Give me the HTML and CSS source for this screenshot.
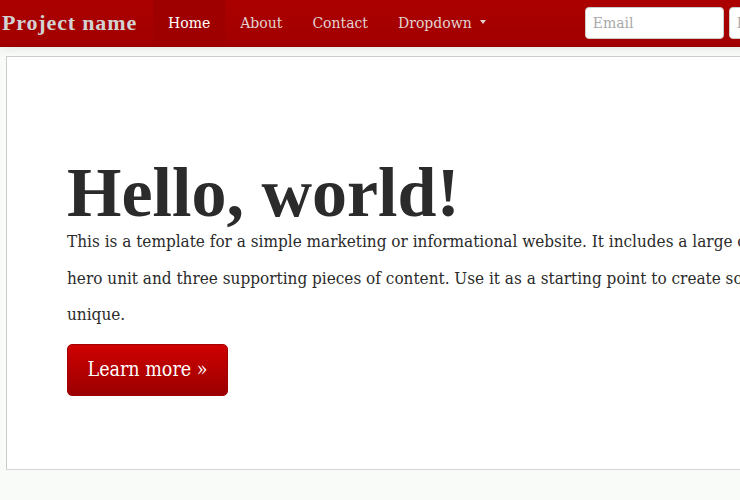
FILE: index.html
```html
<!DOCTYPE html>
<html lang="en">
<head>
<meta charset="utf-8">
<title>Project name</title>
<link rel="stylesheet" href="styles.css">
</head>
<body>
<header class="navbar">
  <a class="brand" href="#">Project name</a>
  <ul class="nav">
    <li class="active"><a href="#">Home</a></li>
    <li><a href="#">About</a></li>
    <li><a href="#">Contact</a></li>
    <li><a href="#">Dropdown <span class="caret"></span></a></li>
  </ul>
  <form class="navbar-form">
    <input class="field" type="text" placeholder="Email">
    <input class="field" type="password" placeholder="Password">
    <button class="signin" type="button">Sign in</button>
  </form>
</header>
<main class="container">
  <section class="hero">
    <h1>Hello, world!</h1>
    <p>This is a template for a simple marketing or informational website. It includes a large callout called the hero unit and three supporting pieces of content. Use it as a starting point to create something more unique.</p>
    <div class="actions"><a class="btn" href="#">Learn more &raquo;</a></div>
  </section>
</main>
</body>
</html>
```

FILE: styles.css
```css
html, body {
  margin: 0;
  padding: 0;
}
body {
  background: #f9fbf9;
  overflow: hidden;
  font-family: "DejaVu Serif Condensed", "DejaVu Serif", serif;
  color: #2b2b2b;
}
.navbar {
  display: flex;
  align-items: stretch;
  height: 46px;
  width: 1100px;
  background: linear-gradient(#ab0000, #a20000);
  border-bottom: 1px solid #960000;
  box-shadow: 0 1px 10px rgba(0, 0, 0, 0.1);
  position: relative;
  z-index: 2;
}
.brand {
  display: flex;
  align-items: center;
  padding: 0 16px 0 2px;
  font-family: "Liberation Serif", serif;
  font-weight: bold;
  font-size: 22px;
  letter-spacing: 0.85px;
  color: #d2d2d2;
  text-decoration: none;
}
.nav {
  display: flex;
  margin: 0;
  padding: 0;
  list-style: none;
}
.nav li a {
  display: flex;
  align-items: center;
  height: 100%;
  padding: 0 15px;
  font-family: "DejaVu Serif", serif;
  font-size: 14px;
  color: #e2d2d2;
  text-decoration: none;
}
.nav li.active a {
  background: #9e0000;
  color: #ffffff;
}
.caret {
  display: inline-block;
  margin-left: 8px;
  margin-top: -2px;
  width: 0;
  height: 0;
  border-left: 3.5px solid transparent;
  border-right: 3.5px solid transparent;
  border-top: 4px solid #e2d2d2;
}
.navbar-form {
  display: flex;
  align-items: center;
  gap: 5px;
  margin: 0 0 0 84px;
}
.field {
  box-sizing: border-box;
  width: 139px;
  height: 32px;
  padding: 4px 7px;
  border: 1px solid #cccccc;
  border-radius: 4px;
  background: #fff;
  font-family: "DejaVu Serif", serif;
  font-size: 14px;
  color: #555;
}
.field::placeholder {
  color: #aaaaaa;
}
.signin {
  height: 32px;
  font-family: "DejaVu Serif", serif;
}
.container {
  padding: 9px 0 0 6px;
}
.hero {
  width: 940px;
  box-sizing: border-box;
  padding: 106px 60px 73px;
  background: #ffffff;
  border: 1px solid #d4d4d4;
  border-top-color: #cccccc;
  border-left-color: #cccccc;
}
.hero h1 {
  margin: 0;
  font-family: "Liberation Serif", serif;
  font-weight: bold;
  font-size: 70px;
  line-height: 60px;
  color: #2b2b2b;
}
.hero p {
  margin: 0;
  font-size: 17px;
  line-height: 36.5px;
  color: #2b2b2b;
}
.actions {
  display: flex;
  padding-top: 11px;
}
.btn {
  display: flex;
  align-items: center;
  justify-content: center;
  box-sizing: border-box;
  width: 161px;
  height: 52px;
  border: 1px solid #a30000;
  border-radius: 5px;
  background: linear-gradient(#cf0000, #9a0000);
  color: #ffffff;
  font-family: "DejaVu Serif Condensed", "DejaVu Serif", serif;
  font-size: 19.5px;
  text-decoration: none;
}
```
